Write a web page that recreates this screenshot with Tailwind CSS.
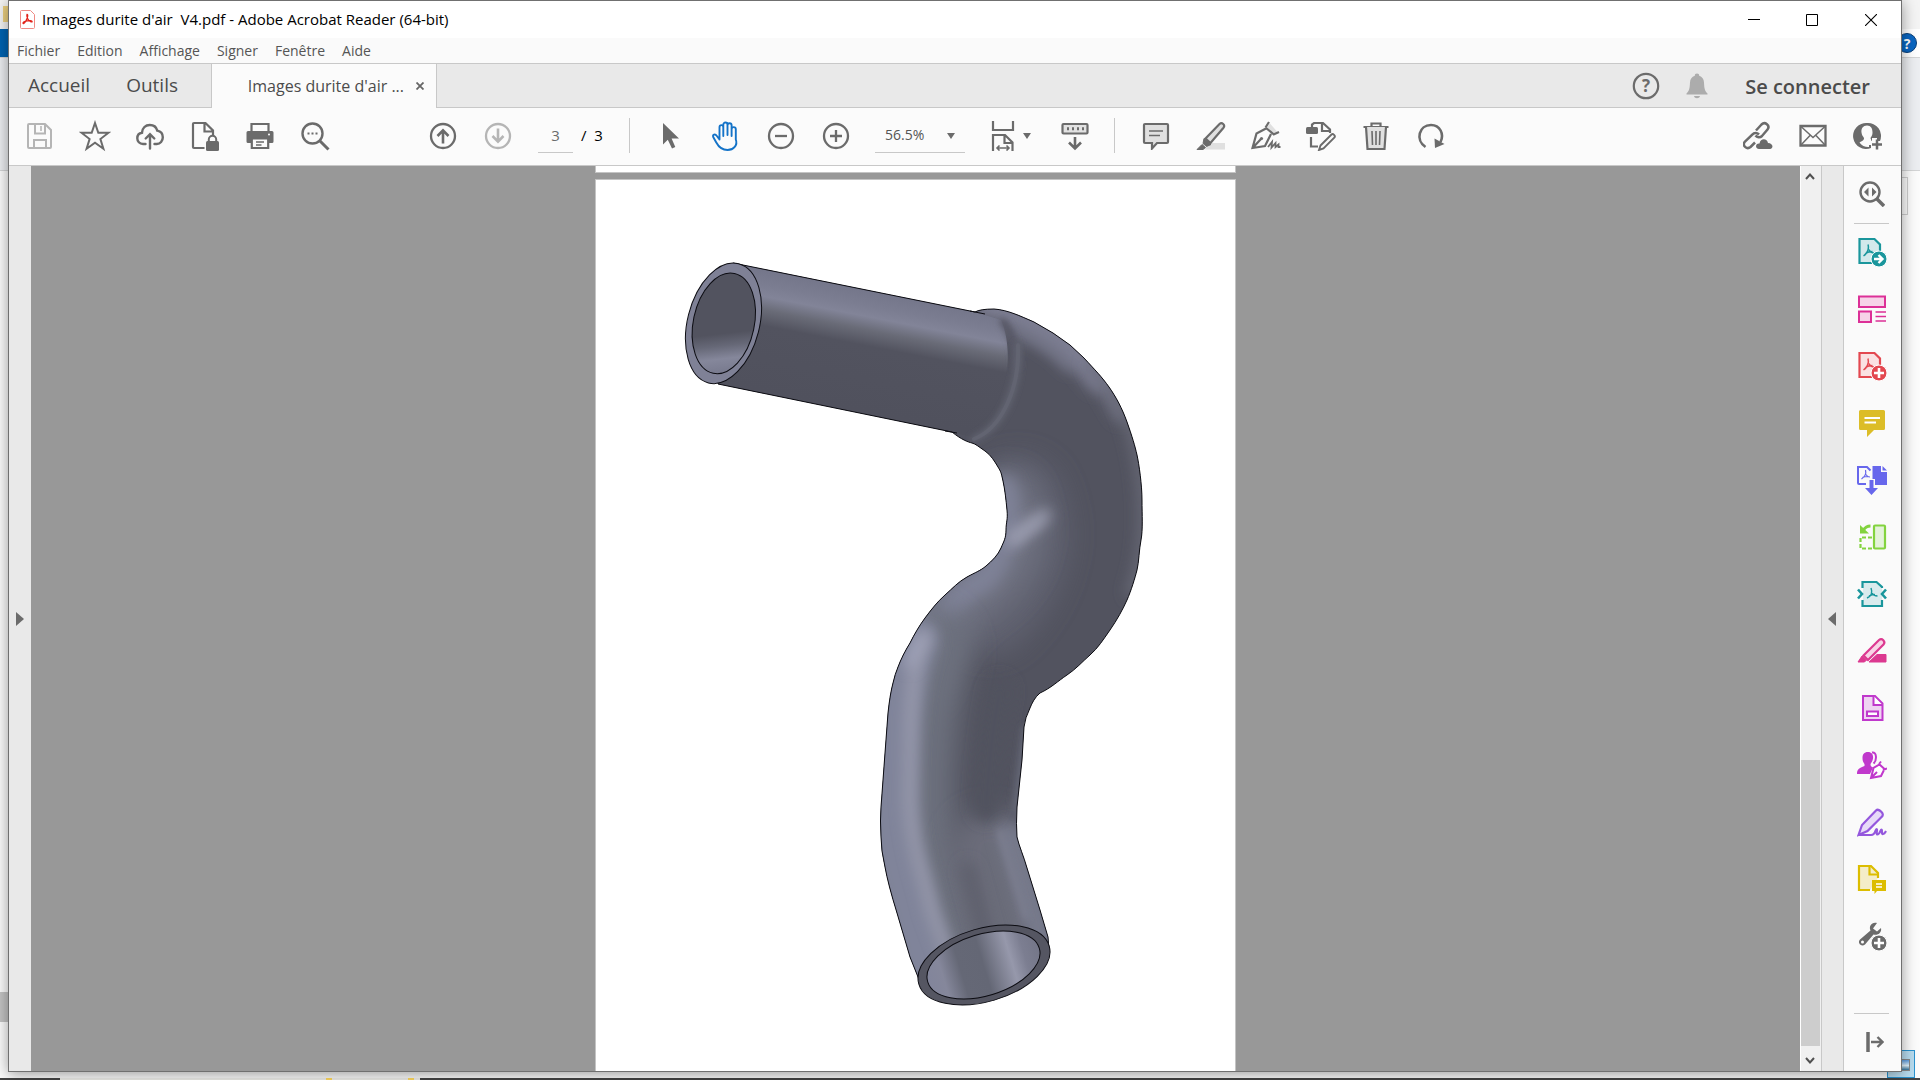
<!DOCTYPE html>
<html lang="fr">
<head>
<meta charset="utf-8">
<title>Images durite d'air V4.pdf - Adobe Acrobat Reader (64-bit)</title>
<script src="https://cdn.jsdelivr.net/npm/@tailwindcss/browser@4"></script>
</head>
<body class="relative h-screen overflow-hidden bg-[#f6f6f6] font-['Open_Sans','Noto_Sans',sans-serif] text-[#4b4b4b]">

<!-- Explorer window showing behind -->
<div class="absolute inset-0 flex flex-col" aria-hidden="true">
  <div class="flex h-[29px] justify-between bg-[#f4f4f4]"><span class="mt-1.5 ml-[3px] h-4 w-2 bg-[#ecd080]"></span></div>
  <div class="flex h-7 justify-between"><span class="w-2 bg-[#0063b1]"></span><span class="w-[18px] bg-white"></span></div>
  <div class="h-[114px] border-y border-[#d4d5d6] bg-[#eceef1]"></div>
  <div class="flex flex-1 flex-col justify-between bg-[#fcfcfc]">
    <div class="mt-1.5 mr-3 h-[38px] self-end border border-[#cfcfcf] pr-24"></div>
    <div class="mb-14 h-[30px] w-2 bg-[#c4c4c4]"></div>
  </div>
  <div class="flex h-0.5 bg-[#444]"><span class="ml-[60px] h-0.5 w-[360px] bg-[#eeeeea] pl-[266px]"><span class="block h-0.5 w-[88px] border-x-[6px] border-[#ffd95e]"></span></span></div>
</div>
<div class="absolute top-[33px] right-[3px] grid size-5 place-items-center rounded-full border border-[#0a3f78] bg-[#0a66c2] text-sm font-bold text-white" aria-hidden="true">?</div>
<div class="absolute right-[5px] bottom-0.5 h-7 w-7 border border-[#2a93cf] bg-[#b8dcef] pt-2 pl-3" aria-hidden="true"><div class="h-3 w-2.5 border border-[#888] bg-[linear-gradient(#5a9be0,#dff0fa_55%,#31719b)]"></div></div>

<div class="absolute inset-0 mr-[18px] mb-2 ml-2 flex flex-col border border-[#707070] bg-[#fbfbfb] shadow-[0_2px_14px_rgba(0,0,0,0.4)]">

  <header class="flex h-[37px] shrink-0 items-center bg-white pl-2.5">
    <svg class="size-[19px]" viewBox="0 0 19 19" fill="none" stroke="#e2231a"><path d="M2.500.5h9l4 4v13a1 1 0 0 1-1 1h-12a1 1 0 0 1-1-1v-16a1 1 0 0 1 1-1Z" stroke="#ef8b85"/><path d="M8 4.500c1.300 0 .7 3-1 6.200-1.500 3-3.200 3.300-3 2.200.3-1.400 4.500-2.500 7.500-2.300 2.200.2 2 1.700.5 1.300C9.500 11.200 7 6.500 8 4.500Z" stroke-width="1.300"/></svg>
    <h1 class="pl-1 text-[15px] whitespace-pre text-black">Images durite d'air  V4.pdf - Adobe Acrobat Reader (64-bit)</h1>
    <div class="ml-auto flex h-full">
      <button class="grid w-[58px] place-items-center" aria-label="Réduire"><svg class="size-3" viewBox="0 0 12 12"><path d="M0 5.500h12" stroke="#000"/></svg></button>
      <button class="grid w-[58px] place-items-center" aria-label="Agrandir"><svg class="size-3" viewBox="0 0 12 12"><path d="M.5.5h11v11H.5Z" fill="none" stroke="#000"/></svg></button>
      <button class="grid w-[60px] place-items-center" aria-label="Fermer"><svg class="size-3" viewBox="0 0 12 12"><path d="m0 0 12 12M12 0 0 12" stroke="#000" stroke-width="1.100"/></svg></button>
    </div>
  </header>

  <nav class="flex h-[26px] shrink-0 items-center gap-[17px] border-b border-[#c8c8c8] bg-[#fafafa] pl-2 text-sm text-[#555]">
    <button>Fichier</button><button>Edition</button><button>Affichage</button><button>Signer</button><button>Fenêtre</button><button>Aide</button>
  </nav>

  <div class="flex h-11 shrink-0 bg-[#e9e9e9]">
    <div class="flex w-[202px] items-center gap-9 border-b border-[#c8c8c8] pl-[19px] text-[19px]">
      <button>Accueil</button><button>Outils</button>
    </div>
    <div class="flex w-[226px] items-center justify-end gap-3 border-x border-[#c8c8c8] bg-[#fbfbfb] pr-3">
      <span class="text-base">Images durite d'air ...</span>
      <button aria-label="Fermer l'onglet"><svg class="size-2" viewBox="0 0 8 8"><path d="m.5.5 7 7m0-7-7 7" stroke="#666" stroke-width="1.800"/></svg></button>
    </div>
    <div class="flex flex-1 items-center justify-end border-b border-[#c8c8c8] pr-[31px]">
      <button class="mr-[25px] text-[#6b6b6b]" aria-label="Aide"><svg class="size-7" viewBox="0 0 28 28"><circle cx="14" cy="14" r="12.200" fill="none" stroke="currentColor" stroke-width="2.200"/><text x="14" y="20" text-anchor="middle" font-size="17" font-weight="700" fill="currentColor">?</text></svg></button>
      <button class="mr-9 text-[#acacac]" aria-label="Notifications"><svg class="h-7 w-6" viewBox="0 0 24 28" fill="currentColor"><path d="M12 1.500c1.500 0 2.200.8 2.200 2.300 3 .9 4.600 3.200 4.800 6.700.3 6 .8 8.500 3.500 11v1H1.500v-1C4.200 19 4.700 16.500 5 10.500c.2-3.500 1.800-5.800 4.800-6.700 0-1.500.7-2.300 2.200-2.300ZM9 24h6c-.5 3-5.500 3-6 0Z"/></svg></button>
      <button class="pt-0.5 text-xl font-semibold">Se connecter</button>
    </div>
  </div>

  <div class="flex h-[58px] shrink-0 items-center border-b border-[#c8c8c8] pr-1.5 pb-0.5 pl-[3px] text-[#6b6b6b]" role="toolbar">
    <button class="grid w-[55px] place-items-center text-[#b5b5b5]" aria-label="Enregistrer"><svg class="size-7" viewBox="0 0 28 28" fill="none" stroke="currentColor" stroke-width="2"><path d="M2 3a1 1 0 0 1 1-1h16l6 6v17a1 1 0 0 1-1 1H3a1 1 0 0 1-1-1Z"/><path d="M9 2v9.500h10V2M8 26v-8h12v8" /><path d="M15 4v5" stroke-width="1.500"/></svg></button>
    <button class="grid w-[55px] place-items-center" aria-label="Favori"><svg class="size-8" viewBox="0 0 32 32" fill="none" stroke="currentColor" stroke-width="2"><path d="m16 3 3.300 9.700H29.500l-8.100 6.300 3 9.700L16 22.800l-8.400 5.900 3-9.700-8.100-6.300h10.200Z"/></svg></button>
    <button class="grid w-[55px] place-items-center" aria-label="Nuage"><svg class="size-7" viewBox="0 0 28 28" fill="none" stroke="currentColor" stroke-width="2.400" stroke-linecap="round"><path d="M9.500 22H7C3.500 22 1.300 19.300 1.300 16.300c0-3 2-5.200 4.700-5.600C6.300 6 9.500 3 13.800 3c4 0 6.600 2.200 7.500 5.600 3.300.6 5.500 3.200 5.500 6.700 0 3.700-2.500 6.700-6 6.700h-2.300M14 26.500V12.500M9.700 16.500 14 12.200l4.300 4.300"/></svg></button>
    <button class="grid w-[55px] place-items-center" aria-label="Protéger"><svg class="h-8 w-7" viewBox="0 0 28 32"><path d="M13.500 28H3a1 1 0 0 1-1-1V4a1 1 0 0 1 1-1h11.500L22 10.500V15M13.500 3v8.500H22" fill="none" stroke="currentColor" stroke-width="2.200"/><rect x="15" y="21" width="13" height="10" rx="1.500" fill="currentColor"/><path d="M17.800 22v-2.500a3.700 3.700 0 0 1 7.400 0V22" fill="none" stroke="currentColor" stroke-width="2"/></svg></button>
    <button class="grid w-[55px] place-items-center" aria-label="Imprimer"><svg class="size-7" viewBox="0 0 28 28"><path d="M5.500 9V2h17v7" fill="none" stroke="currentColor" stroke-width="2.200"/><path d="M2 9h24a1.500 1.500 0 0 1 1.500 1.500v9A1.500 1.500 0 0 1 26 21H2A1.500 1.500 0 0 1 .5 19.500v-9A1.500 1.500 0 0 1 2 9Z" fill="currentColor"/><path d="M5.800 16.500h16.400V26H5.800Z" fill="#fbfbfb" stroke="currentColor" stroke-width="2.200"/><path d="M10 20h8m-8 3h5.500" stroke="currentColor" stroke-width="1.300"/><circle cx="23" cy="12.500" r="1" fill="#fff"/></svg></button>
    <button class="grid w-[55px] place-items-center" aria-label="Rechercher"><svg class="size-[30px]" viewBox="0 0 30 30" fill="none" stroke="currentColor"><circle cx="12.500" cy="12.500" r="10" stroke-width="2.400"/><path d="m20 20 8.500 8.500" stroke-width="3"/><path d="M7.500 12.500h2m2 0h2m2 0h2" stroke-width="2"/></svg></button>
    <button class="ml-[73px] grid w-[55px] place-items-center" aria-label="Page précédente"><svg class="size-7" viewBox="0 0 28 28" fill="none" stroke="currentColor" stroke-width="2.300"><circle cx="14" cy="14" r="12"/><path d="M14 21.500V8m-5.500 6L14 8.300l5.500 5.700" stroke-width="2.600"/></svg></button>
    <button class="grid w-[55px] place-items-center text-[#b5b5b5]" aria-label="Page suivante"><svg class="size-7" viewBox="0 0 28 28" fill="none" stroke="currentColor" stroke-width="2.300"><circle cx="14" cy="14" r="12"/><path d="M14 6.500V20m-5.500-6 5.500 5.700 5.500-5.700" stroke-width="2.600"/></svg></button>
    <input class="ml-[13px] h-[35px] w-[35px] border-b border-[#c8c8c8] text-center text-[15px]" aria-label="Page" value="3">
    <span class="w-[56px] pl-2 text-[15px] whitespace-pre text-black">/  3</span>
    <span class="h-[35px] w-px bg-[#c8c8c8]"></span>
    <button class="ml-[13px] grid w-[55px] place-items-center" aria-label="Sélection"><svg class="h-7 w-5" viewBox="0 0 20 28" fill="currentColor"><path d="M2 1v21.500l4.800-4.700L11 26.500l3.300-1.500-3.700-8.500H18Z"/></svg></button>
    <button class="grid w-[55px] place-items-center text-[#1473c8]" aria-label="Main"><svg class="size-[30px]" viewBox="0 0 30 30" fill="none" stroke="currentColor" stroke-width="1.900" stroke-linecap="round" stroke-linejoin="round"><path d="M8.500 18.500V6.200c0-2.800 3.800-2.800 3.800 0V15M12.300 14V3.800c0-3 4.200-3 4.200 0V14M16.500 14V4.300c0-2.800 4.100-2.800 4.100 0V15M20.600 14V8.200c0-2.800 4.200-2.800 4.200 0v10.300C27 24 22.500 29 16.500 29 11 29 8 26.500 5.300 21.500L2.200 16c-1-2.500 2-3.500 3.500-1.300l2.800 3.800"/></svg></button>
    <button class="grid w-[55px] place-items-center" aria-label="Zoom arrière"><svg class="size-7" viewBox="0 0 28 28" fill="none" stroke="currentColor" stroke-width="2.300"><circle cx="14" cy="14" r="12"/><path d="M8 14h12"/></svg></button>
    <button class="grid w-[55px] place-items-center" aria-label="Zoom avant"><svg class="size-7" viewBox="0 0 28 28" fill="none" stroke="currentColor" stroke-width="2.300"><circle cx="14" cy="14" r="12"/><path d="M8 14h12M14 8v12"/></svg></button>
    <div class="relative ml-3 flex items-center">
      <select class="h-[35px] w-[90px] appearance-none border-b border-[#c8c8c8] pl-2.5 text-sm text-[#555]" aria-label="Niveau de zoom"><option>56.5%</option></select>
      <svg class="pointer-events-none absolute right-[10px] h-1.5 w-2" viewBox="0 0 8 6"><path d="M0 0h8L4 6Z" fill="currentColor"/></svg>
    </div>
    <button class="ml-[26px] flex w-[42px] items-center gap-2" aria-label="Ajuster la largeur"><svg class="h-[30px] w-6" viewBox="0 0 24 30" fill="none" stroke="currentColor" stroke-width="2.200"><path d="M2 0v9h20V0M2 30V14h12l7.500 7.500V30M13.500 14v8H22" /><path d="M6 27h12M8.500 24.500 6 27l2.500 2.500m7-5L18 27l-2.500 2.500" stroke-width="1.600"/></svg><svg class="h-1.5 w-2" viewBox="0 0 8 6"><path d="M0 0h8L4 6Z" fill="currentColor"/></svg></button>
    <button class="ml-[14px] grid w-[55px] place-items-center" aria-label="Défilement"><svg class="h-[30px] w-7" viewBox="0 0 28 30" fill="none" stroke="currentColor" stroke-width="2.200"><rect x="1.500" y="3" width="25" height="9.500" rx="1" fill="#e2e2e2"/><path d="M6 7.800h2m3 0h2m3 0h2m3 0h2" stroke-width="3"/><path d="M14 16v11m-6-5.500 6 6 6-6" stroke-width="2.600"/></svg></button>
    <span class="ml-3 h-[35px] w-px bg-[#c8c8c8]"></span>
    <button class="ml-[13px] grid w-[55px] place-items-center" aria-label="Commentaire"><svg class="size-7" viewBox="0 0 28 28"><path d="M3 2h22a1 1 0 0 1 1 1v17a1 1 0 0 1-1 1H15l-5 5.500V21H3a1 1 0 0 1-1-1V3a1 1 0 0 1 1-1Z" fill="#e0e0e0" stroke="currentColor" stroke-width="2.200"/><path d="M7 9h14M7 13.500h11" stroke="currentColor" stroke-width="1.600"/></svg></button>
    <button class="grid w-[55px] place-items-center" aria-label="Surligner"><svg class="size-[30px]" viewBox="0 0 30 30"><path d="m8 28.500 7-6.500h14v6.500Z" fill="#e0e0e0"/><path d="M9.500 17.500 23.500 3c2.500-2.200 6 1 4 3.700L14.500 22Z" fill="#e0e0e0" stroke="currentColor" stroke-width="2.200"/><path d="m8 17.500 7 6-4.500 2L7 22.500Zm-2 6 3.500 3L7 28.500H1Z" fill="currentColor" stroke="currentColor"/></svg></button>
    <button class="grid w-[55px] place-items-center" aria-label="Signer"><svg class="size-[30px]" viewBox="0 0 30 30" fill="none" stroke="currentColor" stroke-width="2.200"><path d="M15.500 7 19 2.500l7 8-4 3Z" fill="#e0e0e0" stroke="none"/><path d="m15 7 8.500 7M14.500 6.500 18 1M22.500 13.500l5.500-2.500M15 7.500l-9.500 5L1.500 27 14 25l6-12M2 26.500l8-8.500"/><circle cx="10.500" cy="17.500" r="1.600" fill="currentColor" stroke="none"/><path d="m17 26 4-5-.5 5.500 4-4.500v4l3-2.500V26h2" stroke-width="1.800"/></svg></button>
    <button class="grid w-[55px] place-items-center" aria-label="Modifier"><svg class="size-[30px]" viewBox="0 0 30 30" fill="none" stroke="currentColor" stroke-width="2.200"><path d="M6 6V3.500L8 2h9l7 6.500V12M16 2v8h8.500M5 16v9.500h7"/><rect x="0" y="6" width="12" height="7" rx="1.500" fill="currentColor" stroke="none"/><path d="m14.500 24.500 11-11c1.500-1.300 4.300 1.200 3 3l-11 11-4.500 1.500Z" stroke-width="1.900"/></svg></button>
    <button class="grid w-[55px] place-items-center" aria-label="Supprimer"><svg class="size-[30px]" viewBox="0 0 30 30" fill="none" stroke="currentColor" stroke-width="2.200"><path d="M2.500 6h25M10.500 6V2.500h9V6"/><path d="m5 6 1.500 22h17L25 6" fill="#e0e0e0"/><path d="m11 10 .5 14M15 10v14m4-14-.5 14" stroke-width="1.600"/></svg></button>
    <button class="grid w-[55px] place-items-center" aria-label="Rotation"><svg class="size-[30px]" viewBox="0 0 30 30"><path d="M9.500 26C-1 19 3 4 15 4c9 0 13.500 9 9.500 17" fill="none" stroke="currentColor" stroke-width="2.600"/><path d="m18.500 17.500 10 5.500-9.500 4Z" fill="currentColor"/></svg></button>

    <button class="ml-auto grid w-[55px] place-items-center" aria-label="Partager un lien"><svg class="size-[30px]" viewBox="0 0 30 30" fill="none" stroke="currentColor" stroke-width="2.500"><path d="m14 9.500 5.500-6c3.500-3.500 9 1 6 5L20 15c-2 2-5 1.500-6.500-.5M17 13.500c-2-2-5-2-6.500 0L3 20.500c-3.500 4 2 8.500 5.500 5.500L13 21.500" transform="translate(-1)"/><path d="M16 28c-4.500-.5-3.500-6 .5-5.500 1-6 8-5 8.500-.5 5 0 6 5.500 2 6Z" fill="currentColor" stroke="none"/></svg></button>
    <button class="grid w-[55px] place-items-center" aria-label="Courrier"><svg class="size-7" viewBox="0 0 28 28" fill="none" stroke="currentColor"><path d="M1.500 4h25v19.500h-25Z" stroke-width="2.300"/><path d="m2 4.500 12 11 12-11M2 23l9-9.500M26 23l-9-9.500" stroke-width="1.500"/></svg></button>
    <button class="grid w-[55px] place-items-center" aria-label="Ajouter une personne"><svg class="size-[30px]" viewBox="0 0 30 30"><path d="M14 2a13 13 0 1 0 4 25v-3h-3v-4h4v-3h5v3h3A13 13 0 0 0 14 2Z" fill="currentColor"/><path d="M14 4.500c-4 0-6 3-5.500 7 .3 2.500 1.500 4 2.500 5.500 0 2-.8 2.500-4.500 4.500A11 11 0 0 0 16 26v-3l-.5-3h3l-1-3c1.500-2 2-3.500 2-5.500 0-4-1.500-7-5.500-7Z" fill="#fbfbfb"/><path d="M19 23.500h10m-5-5v10" stroke="currentColor" stroke-width="2.500"/></svg></button>
  </div>

  <div class="flex min-h-0 flex-1">
    <button class="grid w-[22px] shrink-0 place-items-center bg-[#e9e9e9]" aria-label="Ouvrir le volet"><svg class="h-3.5 w-2" viewBox="0 0 8 14"><path d="M0 0v14l8-7Z" fill="#6b6b6b"/></svg></button>

    <main class="min-w-0 flex-1 overflow-hidden bg-[#989898]">
      <div class="mx-auto flex w-[641px] flex-col gap-1.5">
        <div class="h-[7px] border-x border-b border-[#c4c4c4] bg-white"></div>
        <div class="border-x border-t border-[#c4c4c4] bg-white">
          <svg class="block w-full" viewBox="596 180 639 891" role="img" aria-label="Durite d'air">
            <defs>
              <path id="tube" d="M733 263 975 312Q980 309 994 309C1008 310 1020 316 1034 322L1053 333 1070 345 1084 358C1095 370 1102 377 1109 387S1122 408 1127 422 1135 446 1137 455 1142 485 1142 500 1143 530 1141 540 1139 562 1137 570 1131 591 1127 600 1117 620 1110 630 1098 648 1090 655 1076 669 1067 675 1051 688 1040 693C1035 697 1032 703 1030 708Q1025 718 1024 727L1022 760 1017 807Q1016 825 1017 837C1019 846 1024 857 1027 868L1040 910 1048 937 1049 950 985 985 920 982 910 957 897 913Q888 884 885 867 881 850 881 837 880 820 881 807L885 753 888 713Q890 694 893 683 895 674 898 667C901 659 905 651 910 643 914 635 919 626 925 618S937 602 945 595 958 582 967 577 980 571 986 566 998 555 1001 548 1006 538 1006 530 1008 520 1007 510 1005 490 1003 481 1001 472 998 467 991 455 985 451 976 444 972 443 962 440 952 432L718 384Z"/>
              <clipPath id="tubeClip"><use href="#tube"/></clipPath>
              <clipPath id="straight"><path d="M700 240 975 312 1001 320C1015 350 1008 415 975 438L952 432 700 390Z"/></clipPath>
              <linearGradient id="gs" gradientUnits="userSpaceOnUse" x1="854" y1="287" x2="831" y2="405">
                <stop offset="0" stop-color="#74768a"/><stop offset=".13" stop-color="#7b7d91"/><stop offset=".22" stop-color="#828498"/><stop offset=".33" stop-color="#696b77"/><stop offset=".46" stop-color="#52535f"/><stop offset="1" stop-color="#50515d"/>
              </linearGradient>
              <linearGradient id="gi" x1=".4" y1="0" x2=".6" y2="1">
                <stop offset=".6" stop-color="#52535f"/><stop offset=".72" stop-color="#666877"/><stop offset=".85" stop-color="#85879b"/><stop offset="1" stop-color="#77798d"/>
              </linearGradient>
              <linearGradient id="ge" x1="0" y1="0" x2="1" y2="0">
                <stop offset="0" stop-color="#82859b"/><stop offset=".14" stop-color="#85879b"/><stop offset=".3" stop-color="#656876"/><stop offset=".5" stop-color="#646775"/><stop offset=".74" stop-color="#9698ab"/><stop offset=".86" stop-color="#7c7e91"/><stop offset="1" stop-color="#747688"/>
              </linearGradient>
              <filter id="b3" filterUnits="userSpaceOnUse" x="596" y="180" width="639" height="891"><feGaussianBlur stdDeviation="3"/></filter>
              <filter id="b7" filterUnits="userSpaceOnUse" x="596" y="180" width="639" height="891"><feGaussianBlur stdDeviation="7"/></filter>
              <filter id="b12" filterUnits="userSpaceOnUse" x="596" y="180" width="639" height="891"><feGaussianBlur stdDeviation="13"/></filter>
            </defs>
            <use href="#tube" fill="#52535f"/>
            <g clip-path="url(#tubeClip)" fill="none" stroke-linecap="round">
              <!-- outer side of the bend -->
              <path d="M985 300C1035 315 1075 340 1100 375" stroke="#7b7d91" stroke-width="34" filter="url(#b7)"/>
              <path d="M1095 365 1122 412" stroke="#6f7182" stroke-width="20" filter="url(#b7)"/>
              <path d="M1010 330C1035 338 1055 352 1070 368" stroke="#7f8195" stroke-width="7" filter="url(#b7)"/>
              <path d="M1118 395C1150 460 1150 545 1132 592" stroke="#676976" stroke-width="12" filter="url(#b7)"/>
              <!-- inner side of the bend -->
              <path d="M1018 500C1035 540 1020 580 990 610" stroke="#5f616e" stroke-width="88" filter="url(#b12)"/>
              <path d="M1008 500C1020 530 1015 560 985 585 950 608 925 640 915 680" stroke="#6e7180" stroke-width="58" filter="url(#b12)"/>
              <path d="M1004 488C1012 515 1008 550 985 578 945 600 915 640 900 680" stroke="#7e8196" stroke-width="26" filter="url(#b7)"/>
              <path d="m1012 540 33-25" stroke="#999bae" stroke-width="12" filter="url(#b7)"/>
              <path d="m1013 540 26-19" stroke="#a0a2b6" stroke-width="6" filter="url(#b7)"/>
              <!-- lower leg -->
              <path d="M925 650C905 720 905 800 912 850L950 990" stroke="#6c6f7d" stroke-width="92" filter="url(#b12)"/>
              <path d="M990 850 1020 985" stroke="#6a6c79" stroke-width="80" filter="url(#b12)"/>
              <path d="M915 640C890 700 890 800 895 850L935 1000" stroke="#80849a" stroke-width="48" filter="url(#b7)"/>
              <path d="M926 636C914 660 913 680 911 720L910 800C912 850 926 880 932 910L954 970" stroke="#9799ac" stroke-width="13" filter="url(#b7)"/>
              <path d="M921 638 909 664" stroke="#a4a7bd" stroke-width="9" filter="url(#b7)"/>
              <path d="M1000 690C994 720 989 760 986 808" stroke="#51525e" stroke-width="27" filter="url(#b7)"/>
              <path d="M1026 730 1016 810" stroke="#646674" stroke-width="9" filter="url(#b3)"/>
              <path d="M968 870 992 960" stroke="#5f616d" stroke-width="16" filter="url(#b7)"/>
              <path d="M1010 835 1042 940" stroke="#777a8c" stroke-width="25" filter="url(#b7)"/>
              <path d="M1000 832 1026 917" stroke="#7d7f90" stroke-width="5" filter="url(#b3)"/>
              <!-- straight end and its weld -->
              <g clip-path="url(#straight)"><path d="M700 240h330v220H700Z" fill="url(#gs)"/></g>
              <path d="M1003 322C1012 332 1016 350 1016 365" stroke="#565765" stroke-width="7" filter="url(#b3)"/>
              <path d="M1018 345C1020 388 1002 428 974 439" stroke="#646673" stroke-width="6" filter="url(#b3)"/>
              <path d="M1018 345C1020 388 1002 428 974 439" stroke="#666875" stroke-width="4" stroke-opacity=".6"/>
            </g>
            <use href="#tube" fill="none" stroke="#0c0c12"/>
            <path d="m970 311 15 3M945 431l12 2" stroke="#0c0c12"/>
            <g stroke="#0c0c12">
              <ellipse cx="723.500" cy="323.300" rx="36" ry="61.500" transform="rotate(14.200 723.500 323.300)" fill="#7f8196"/>
              <ellipse cx="723.800" cy="323.300" rx="30.500" ry="51" transform="rotate(12 723.800 323.300)" fill="url(#gi)"/>
              <ellipse cx="984" cy="965" rx="67.900" ry="36.600" transform="rotate(-16.300 984 965)" fill="#555662"/>
              <ellipse cx="983.500" cy="965" rx="58.300" ry="30.800" transform="rotate(-16.900 983.500 965)" fill="url(#ge)"/>
            </g>
          </svg>
        </div>
      </div>
    </main>

    <div class="flex w-[22px] shrink-0 flex-col items-center border-r border-l border-r-[#c8c8c8] border-l-white bg-[#f0f0f0]">
      <button class="grid h-[22px] w-full place-items-center pr-0.5 pb-0.5" aria-label="Défiler vers le haut"><svg class="h-[7px] w-2.5" viewBox="0 0 10 7"><path d="m1 6 4-4.500L9 6" fill="none" stroke="#505050" stroke-width="2"/></svg></button>
      <div class="flex w-full flex-1 flex-col justify-end"><div class="h-1/3 w-[19px] bg-[#cdcdcd]"></div></div>
      <button class="grid h-[25px] w-full place-items-center pt-1 pr-0.5" aria-label="Défiler vers le bas"><svg class="h-[7px] w-2.5" viewBox="0 0 10 7"><path d="m1 1 4 4.500L9 1" fill="none" stroke="#505050" stroke-width="2"/></svg></button>
    </div>
    <button class="grid w-[22px] shrink-0 place-items-center border-r border-[#c8c8c8] bg-[#e9e9e9] pr-0.5" aria-label="Masquer le volet"><svg class="h-3.5 w-2" viewBox="0 0 8 14"><path d="M8 0v14L0 7Z" fill="#6b6b6b"/></svg></button>

    <aside class="flex w-[57px] shrink-0 flex-col items-center bg-[#fafafa] pr-0.5">
      <button class="grid h-[57px] w-full place-items-center pb-0.5" aria-label="Rechercher un outil"><svg class="size-[26px]" viewBox="0 0 26 26" fill="none" stroke="#6b6b6b"><circle cx="11" cy="11" r="9.500" stroke-width="2.400"/><path d="m18 18 7 7" stroke-width="3.500"/><path d="M9.500 6.500v9L5 11Zm3.500 0v9l4.500-4.500Z" fill="#6b6b6b" stroke="none"/></svg></button>
      <div class="h-px w-[35px] bg-[#c8c8c8]"></div>
      <button class="grid h-[57px] w-full place-items-center pb-0.5" aria-label="Exporter"><svg class="size-[30px]" viewBox="0 0 30 30" fill="none" stroke="#1a969c"><path d="M2.500 2h15L23 7.500V26H2.500Z" fill="#d3e9eb" stroke-width="2.200"/><path d="M11 7.500c1.500 5-1.500 9.500-4.500 11.500M12 12.500c1 2.500 3 3.500 5.500 3.500M8.500 16.500c3-2 5-2 7-2" stroke-width="1.500"/><circle cx="22" cy="22" r="8" fill="#1a969c" stroke="#fff"/><path d="M17 22h8m-3.500-4 4 4-4 4" stroke="#fff" stroke-width="2.400"/></svg></button>
      <button class="grid h-[57px] w-full place-items-center pb-0.5" aria-label="Organiser"><svg class="size-[30px]" viewBox="0 0 30 30" fill="#f6d3e8" stroke="#dc3097" stroke-width="2"><path d="M2 2.500h26v10.500H2ZM2 17.500h12v10.500H2Z"/><path d="M18.500 18H29m-10.500 4.500H29M18.500 27H29" stroke-width="1.300"/></svg></button>
      <button class="grid h-[57px] w-full place-items-center pb-0.5" aria-label="Créer un PDF"><svg class="size-[30px]" viewBox="0 0 30 30" fill="none" stroke="#e34850"><path d="M2.500 2h15L23 7.500V26H2.500Z" fill="#fae1e2" stroke-width="2.200"/><path d="M11 7.500c1.500 5-1.500 9.500-4.500 11.500M12 12.500c1 2.500 3 3.500 5.500 3.500M8.500 16.500c3-2 5-2 7-2" stroke-width="1.500"/><circle cx="22" cy="22" r="8" fill="#e34850" stroke="#fff"/><path d="M17 22h10m-5-5v10" stroke="#fff" stroke-width="2.600"/></svg></button>
      <button class="grid h-[57px] w-full place-items-center pb-0.5" aria-label="Commenter"><svg class="size-[30px]" viewBox="0 0 30 30"><path d="M3.500 2h23A1.500 1.500 0 0 1 28 3.500v17a1.500 1.500 0 0 1-1.500 1.500H17l-7 7v-7H3.500A1.500 1.500 0 0 1 2 20.500v-17A1.500 1.500 0 0 1 3.500 2Z" fill="#dcbd27"/><path d="M7.500 10h15.500M7.500 14.500H19" stroke="#fff" stroke-width="2.200"/></svg></button>
      <button class="grid h-[57px] w-full place-items-center pb-0.5" aria-label="Combiner"><svg class="size-[30px]" viewBox="0 0 30 30" fill="none" stroke="#6767ec"><path d="M9 19H2a1 1 0 0 1-1-1V2h9l3.500 3.500" stroke-width="2"/><path d="M8.500 5c1 4-1 7-4 9M9 9.500c1 2 2.500 2.500 4 2.500M5.500 12.500c2-1 3.500-1 5-1" stroke-width="1.200"/><path d="M15.500 1H24v6h6v13H18v-6h-2.500ZM25.500 1 30 5.500h-4.500ZM12.500 15h4v8H21l-6.500 7L8 23h4.500Z" fill="#6767ec" stroke="none"/></svg></button>
      <button class="grid h-[57px] w-full place-items-center pb-0.5" aria-label="Pages"><svg class="size-[30px]" viewBox="0 0 30 30" fill="none" stroke="#83d33f" stroke-width="2.200"><rect x="17" y="3.500" width="11" height="23" rx="1" fill="#e4f2da"/><path d="M15 15.500H3.500v11H15" stroke-dasharray="4 2"/><path d="M13.500 4C10 4 8 5.500 6.500 8" stroke-width="3"/><path d="M3 3v8.500h9Z" fill="#83d33f" stroke="none"/></svg></button>
      <button class="grid h-[57px] w-full place-items-center pb-0.5" aria-label="Compresser"><svg class="size-[30px]" viewBox="0 0 30 30" fill="none" stroke="#1a969c"><path d="M5.500 9V3h14L25 8v1m0 12v6H5.500v-6" stroke-width="2.200" fill="#d9ebed"/><path d="M6 9h19v12H6Z" fill="#d9ebed" stroke="none"/><path d="M14 9c2 5-.5 8.500-4 10M15 14c1 2 3 3 5.500 3M12 17c2-1 4-1.500 6-1.500" stroke-width="1.500"/><path d="m1 10.500 4 4.500-4 4.500m28-9L25 15l4 4.500" stroke-width="2.600"/></svg></button>
      <button class="grid h-[57px] w-full place-items-center pb-0.5" aria-label="Biffer"><svg class="size-[30px]" viewBox="0 0 30 30"><path d="m12 26 8-7.500h9V26ZM1 26l4-6 4.500 4-2 2Z" fill="#dc3990" stroke="#dc3990"/><path d="M6.500 19.500 22 4c3-2.500 7 1.500 4.500 4.500L11 24Z" fill="#f8d4e6" stroke="#dc3990" stroke-width="2.200"/></svg></button>
      <button class="grid h-[57px] w-full place-items-center pb-0.5" aria-label="Formulaire"><svg class="size-[30px]" viewBox="0 0 30 30" fill="none" stroke="#c038cc" stroke-width="2"><path d="M6 3h12l7.500 7.500V27H6Z" fill="#efd3f2"/><path d="M16.500 3v9h9M10 18.500h11V23H10Z" fill="#fff"/></svg></button>
      <button class="grid h-[57px] w-full place-items-center pb-0.5" aria-label="Demander une signature"><svg class="size-[30px]" viewBox="0 0 30 30"><path d="M11 2c4 0 5.500 3 5 6.500-.4 2.500-1.500 4-2.500 5.500 0 2 .5 2.500 2.500 3.500L13 24H0c0-5 2-5.500 7.500-8V14C6 12 5.500 10.500 5.500 8 5.500 4.500 7 2 11 2Z" fill="#c038cc"/><path d="M15 2.500c5-1 5 8 1.500 11" fill="none" stroke="#c038cc" stroke-width="2"/><path d="m14 28 2.500-10 6-3.500 5 4.500-3.500 7ZM14 28l6-6M22 14l2-2.500M26 20l4-1.500" fill="#fff" stroke="#c038cc" stroke-width="2"/></svg></button>
      <button class="grid h-[57px] w-full place-items-center pb-0.5" aria-label="Remplir et signer"><svg class="size-[30px]" viewBox="0 0 30 30" fill="none" stroke="#9457dd" stroke-width="2.200"><path d="M1.500 28 5 18 19 3.500c2-2 4 0 5.500 1.500s2 3.500 0 5L10.500 24Z" fill="#e7daf8"/><path d="M1.500 28H14c5 0 4-6 5.500-6s-1 5.500 1 5.500 3-5 4-5-.5 5 1.500 4.500 2-1.500 3-3"/></svg></button>
      <button class="grid h-[57px] w-full place-items-center pb-0.5" aria-label="Envoyer pour commentaires"><svg class="size-[30px]" viewBox="0 0 30 30" fill="none" stroke="#dcbd00" stroke-width="2.200"><path d="M13 26H2V2h12l7 7v5" fill="#f4edc8"/><path d="M12.500 2v8.500H21"/><path d="M15 16h14v11H20l-2.500 3v-3H15Z" fill="#dcbd00" stroke="none"/><path d="M19 20h6m-6 3h6" stroke="#fff" stroke-width="1.300"/></svg></button>
      <button class="grid h-[57px] w-full place-items-center pb-0.5" aria-label="Plus d'outils"><svg class="size-[30px]" viewBox="0 0 30 30"><path d="M20 2c-5-1.500-8.500 3-6.500 7.500L3 18.500c-3 3 1 8 5 5l8.500-10c4.500 1.500 8.500-2 7.500-6.500l-4 3.500-4-3Z" fill="#6b6b6b"/><circle cx="5.500" cy="21" r="1.500" fill="#fff"/><circle cx="22" cy="22" r="8" fill="#6b6b6b" stroke="#fff"/><path d="M17 22h10m-5-5v10" stroke="#fff" stroke-width="2.600"/></svg></button>
      <div class="mt-auto h-px w-[35px] bg-[#c8c8c8]"></div>
      <button class="grid h-[57px] w-full place-items-center pb-0.5 pl-1.5" aria-label="Réduire le volet"><svg class="h-5 w-[18px]" viewBox="0 0 18 20" fill="none" stroke="#6b6b6b"><path d="M2 0v20" stroke-width="3.500"/><path d="M5 10h11m-4.500-5 5 5-5 5" stroke-width="2.400"/></svg></button>
    </aside>
  </div>
</div>
</body>
</html>
